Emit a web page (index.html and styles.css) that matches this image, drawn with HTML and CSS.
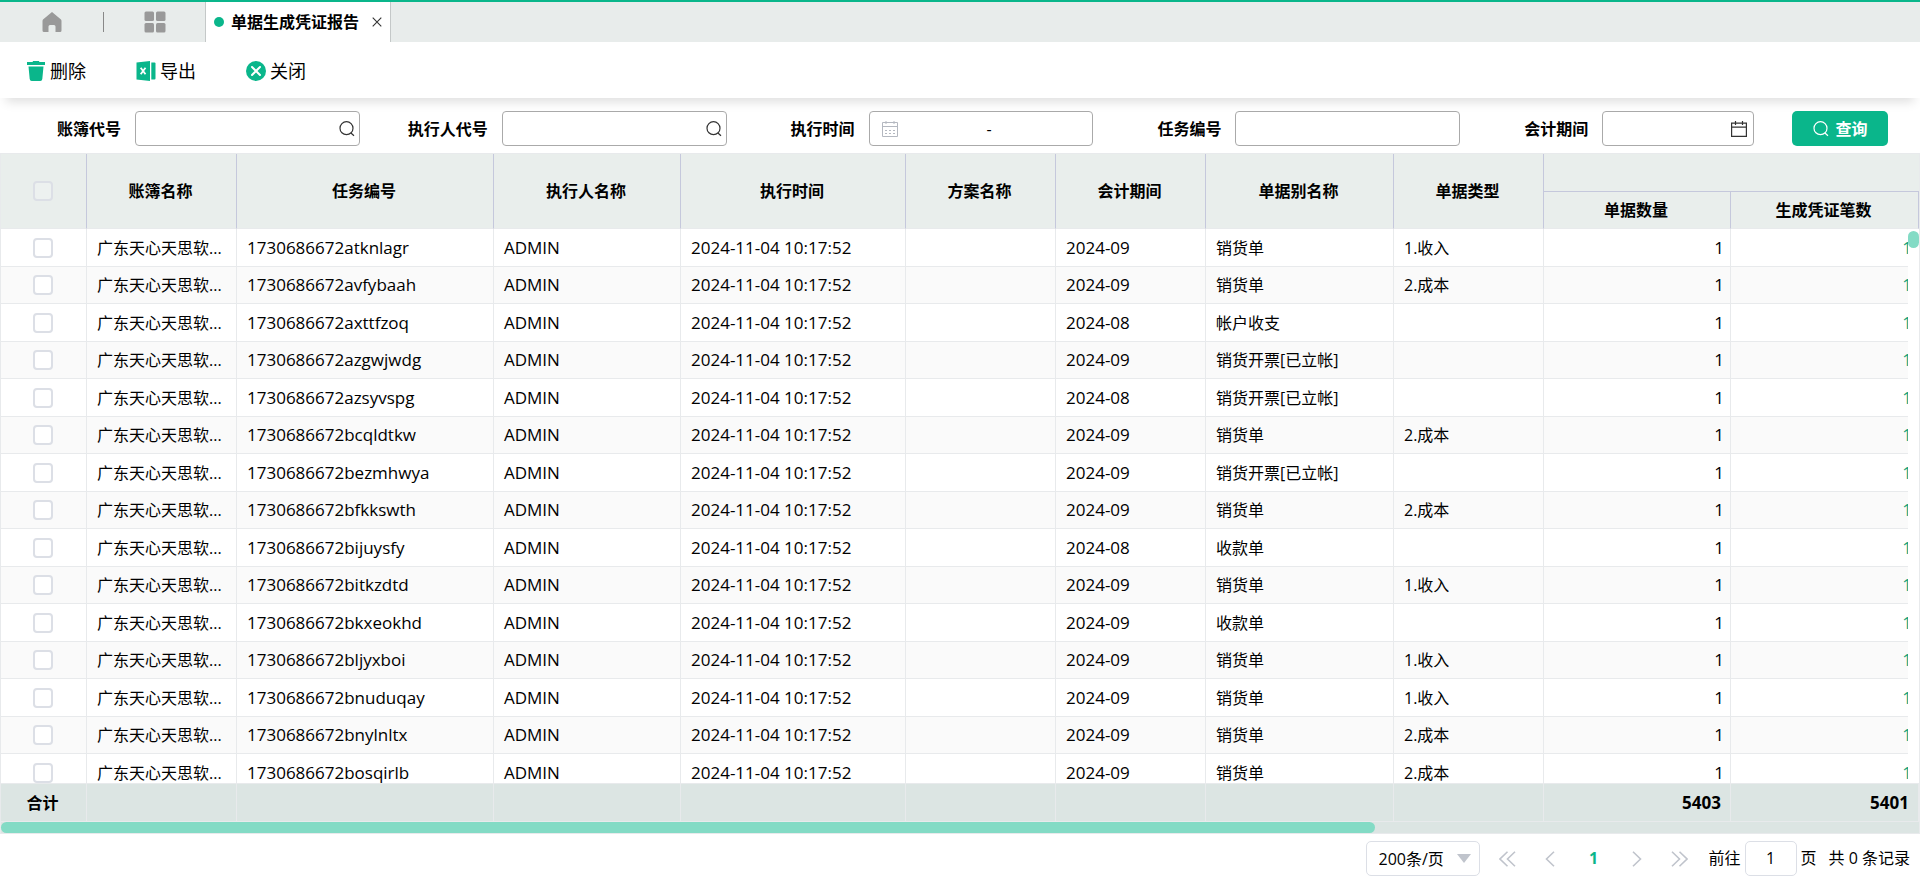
FILE: index.html
```html
<!DOCTYPE html>
<html lang="zh-CN">
<head>
<meta charset="utf-8">
<title>单据生成凭证报告</title>
<link rel="stylesheet" href="styles.css">
</head>
<body>
<div class="app">
  <nav class="tabs">
    <a class="nav-icon" href="#" aria-label="首页"><svg width="20" height="22" viewBox="0 0 20 22"><path d="M10 1 1 8.500Q.5 9 .5 10v9.500Q.5 21 2 21h4.500v-5.500Q6.500 14 8 14h4q1.500 0 1.500 1.500V21H18q1.500 0 1.500-1.500V10q0-1-.5-1.500z" fill="#999"/></svg></a>
    <span class="nav-line"></span>
    <a class="nav-icon" href="#" aria-label="应用"><svg width="22" height="22" viewBox="0 0 22 22" fill="#999"><rect x=".5" y=".5" width="9.500" height="9.500" rx="1.500"/><rect x="12" y=".5" width="9.500" height="9.500" rx="1.500"/><rect x=".5" y="12" width="9.500" height="9.500" rx="1.500"/><rect x="12" y="12" width="9.500" height="9.500" rx="1.500"/></svg></a>
    <div class="tab">
      <span class="dot"></span>
      <span class="tab-title">单据生成凭证报告</span>
      <button class="tab-close" aria-label="关闭标签"><svg width="10" height="10" viewBox="0 0 10 10"><path d="m.7.7 8.600 8.600M9.300.7.7 9.300" stroke="#333" stroke-width="1.100"/></svg></button>
    </div>
  </nav>

  <div class="toolbar">
    <button class="tool"><svg width="20" height="20" viewBox="0 0 20 20" fill="#0ab68b"><path d="M1 1h5.500l.6-1h5.800l.6 1H19v3H1zM2.500 5.500h15L16.300 18q-.2 2-2 2H5.700q-1.800 0-2-2z"/></svg>删除</button>
    <button class="tool"><svg width="20" height="20" viewBox="0 0 20 20"><path d="M.5 1.500 14 0v20L.5 18.500z" fill="#0ab68b"/><path d="M15.300 1.500h3.200q1 0 1 1v15q0 1-1 1h-3.200z" fill="#0ab68b"/><path d="m4.700 6.800 4.800 6.400m0-6.400-4.800 6.400" stroke="#fff" stroke-width="1.800"/></svg>导出</button>
    <button class="tool"><svg width="20" height="20" viewBox="0 0 20 20"><circle cx="10" cy="10" r="10" fill="#0ab68b"/><path d="m6 6 8 8m0-8-8 8" stroke="#fff" stroke-width="2" stroke-linecap="round"/></svg>关闭</button>
  </div>

  <form class="filters">
    <div class="field"><label for="book">账簿代号</label><div class="box"><input id="book" type="text"><svg class="glass" width="16" height="16" viewBox="0 0 16 16"><path d="M14 7.200A6.500 6.500 0 1 1 1 7.200a6.500 6.500 0 0 1 13 0zM12.200 12.200l2.800 2.600"/></svg></div></div>
    <div class="field"><label for="exec">执行人代号</label><div class="box"><input id="exec" type="text"><svg class="glass" width="16" height="16" viewBox="0 0 16 16"><path d="M14 7.200A6.500 6.500 0 1 1 1 7.200a6.500 6.500 0 0 1 13 0zM12.200 12.200l2.800 2.600"/></svg></div></div>
    <div class="field"><label for="from">执行时间</label><div class="box range"><svg width="16" height="16" viewBox="0 0 16 16" fill="none" stroke="#b4b8c0"><path d="M.5 1.500h15v14H.5zM.5 5.500h15M4 0v3M12 0v3"/><path d="M3 9.500h10M3 12.500h10" stroke-dasharray="2 2"/></svg><input id="from" type="text" aria-label="开始时间"><span>-</span><input type="text" aria-label="结束时间"></div></div>
    <div class="field"><label for="task">任务编号</label><div class="box"><input id="task" type="text"></div></div>
    <div class="field field-short"><label for="period">会计期间</label><div class="box period"><input id="period" type="text"><svg width="16" height="16" viewBox="0 0 16 16" fill="none" stroke="#333" stroke-width="1.200"><path d="M.6 2.100h14.800v13.300H.6zM.6 6.200h14.800M4.500 0v4M11.500 0v4"/></svg></div></div>
    <button class="query" type="button"><svg class="glass" width="16" height="16" viewBox="0 0 16 16"><path d="M14 7.200A6.500 6.500 0 1 1 1 7.200a6.500 6.500 0 0 1 13 0zM12.200 12.200l2.800 2.600"/></svg>查询</button>
  </form>

  <main class="grid">
    <table class="head">
      <colgroup><col class="c-check"><col class="c-s"><col class="c-task"><col class="c-m"><col class="c-time"><col class="c-s"><col class="c-s"><col class="c-l"><col class="c-s"><col class="c-m"><col class="c-l"></colgroup>
      <thead>
        <tr><th rowspan="2"><input type="checkbox" aria-label="全选"></th><th rowspan="2">账簿名称</th><th rowspan="2">任务编号</th><th rowspan="2">执行人名称</th><th rowspan="2">执行时间</th><th rowspan="2">方案名称</th><th rowspan="2">会计期间</th><th rowspan="2">单据别名称</th><th rowspan="2">单据类型</th><th class="group" colspan="2"></th></tr>
        <tr><th>单据数量</th><th>生成凭证笔数</th></tr>
      </thead>
    </table>
    <div class="rows">
      <table class="body">
        <colgroup><col class="c-check"><col class="c-s"><col class="c-task"><col class="c-m"><col class="c-time"><col class="c-s"><col class="c-s"><col class="c-l"><col class="c-s"><col class="c-m"><col class="c-l"></colgroup>
        <tbody>
          <tr><td><input type="checkbox" aria-label="选择"></td><td>广东天心天思软...</td><td class="lat">1730686672atknlagr</td><td class="lat">ADMIN</td><td class="lat">2024-11-04 10:17:52</td><td></td><td class="lat">2024-09</td><td>销货单</td><td>1.收入</td><td>1</td><td><a href="#">1</a></td></tr>
          <tr><td><input type="checkbox" aria-label="选择"></td><td>广东天心天思软...</td><td class="lat">1730686672avfybaah</td><td class="lat">ADMIN</td><td class="lat">2024-11-04 10:17:52</td><td></td><td class="lat">2024-09</td><td>销货单</td><td>2.成本</td><td>1</td><td><a href="#">1</a></td></tr>
          <tr><td><input type="checkbox" aria-label="选择"></td><td>广东天心天思软...</td><td class="lat">1730686672axttfzoq</td><td class="lat">ADMIN</td><td class="lat">2024-11-04 10:17:52</td><td></td><td class="lat">2024-08</td><td>帐户收支</td><td></td><td>1</td><td><a href="#">1</a></td></tr>
          <tr><td><input type="checkbox" aria-label="选择"></td><td>广东天心天思软...</td><td class="lat">1730686672azgwjwdg</td><td class="lat">ADMIN</td><td class="lat">2024-11-04 10:17:52</td><td></td><td class="lat">2024-09</td><td>销货开票[已立帐]</td><td></td><td>1</td><td><a href="#">1</a></td></tr>
          <tr><td><input type="checkbox" aria-label="选择"></td><td>广东天心天思软...</td><td class="lat">1730686672azsyvspg</td><td class="lat">ADMIN</td><td class="lat">2024-11-04 10:17:52</td><td></td><td class="lat">2024-08</td><td>销货开票[已立帐]</td><td></td><td>1</td><td><a href="#">1</a></td></tr>
          <tr><td><input type="checkbox" aria-label="选择"></td><td>广东天心天思软...</td><td class="lat">1730686672bcqldtkw</td><td class="lat">ADMIN</td><td class="lat">2024-11-04 10:17:52</td><td></td><td class="lat">2024-09</td><td>销货单</td><td>2.成本</td><td>1</td><td><a href="#">1</a></td></tr>
          <tr><td><input type="checkbox" aria-label="选择"></td><td>广东天心天思软...</td><td class="lat">1730686672bezmhwya</td><td class="lat">ADMIN</td><td class="lat">2024-11-04 10:17:52</td><td></td><td class="lat">2024-09</td><td>销货开票[已立帐]</td><td></td><td>1</td><td><a href="#">1</a></td></tr>
          <tr><td><input type="checkbox" aria-label="选择"></td><td>广东天心天思软...</td><td class="lat">1730686672bfkkswth</td><td class="lat">ADMIN</td><td class="lat">2024-11-04 10:17:52</td><td></td><td class="lat">2024-09</td><td>销货单</td><td>2.成本</td><td>1</td><td><a href="#">1</a></td></tr>
          <tr><td><input type="checkbox" aria-label="选择"></td><td>广东天心天思软...</td><td class="lat">1730686672bijuysfy</td><td class="lat">ADMIN</td><td class="lat">2024-11-04 10:17:52</td><td></td><td class="lat">2024-08</td><td>收款单</td><td></td><td>1</td><td><a href="#">1</a></td></tr>
          <tr><td><input type="checkbox" aria-label="选择"></td><td>广东天心天思软...</td><td class="lat">1730686672bitkzdtd</td><td class="lat">ADMIN</td><td class="lat">2024-11-04 10:17:52</td><td></td><td class="lat">2024-09</td><td>销货单</td><td>1.收入</td><td>1</td><td><a href="#">1</a></td></tr>
          <tr><td><input type="checkbox" aria-label="选择"></td><td>广东天心天思软...</td><td class="lat">1730686672bkxeokhd</td><td class="lat">ADMIN</td><td class="lat">2024-11-04 10:17:52</td><td></td><td class="lat">2024-09</td><td>收款单</td><td></td><td>1</td><td><a href="#">1</a></td></tr>
          <tr><td><input type="checkbox" aria-label="选择"></td><td>广东天心天思软...</td><td class="lat">1730686672bljyxboi</td><td class="lat">ADMIN</td><td class="lat">2024-11-04 10:17:52</td><td></td><td class="lat">2024-09</td><td>销货单</td><td>1.收入</td><td>1</td><td><a href="#">1</a></td></tr>
          <tr><td><input type="checkbox" aria-label="选择"></td><td>广东天心天思软...</td><td class="lat">1730686672bnuduqay</td><td class="lat">ADMIN</td><td class="lat">2024-11-04 10:17:52</td><td></td><td class="lat">2024-09</td><td>销货单</td><td>1.收入</td><td>1</td><td><a href="#">1</a></td></tr>
          <tr><td><input type="checkbox" aria-label="选择"></td><td>广东天心天思软...</td><td class="lat">1730686672bnylnltx</td><td class="lat">ADMIN</td><td class="lat">2024-11-04 10:17:52</td><td></td><td class="lat">2024-09</td><td>销货单</td><td>2.成本</td><td>1</td><td><a href="#">1</a></td></tr>
          <tr><td><input type="checkbox" aria-label="选择"></td><td>广东天心天思软...</td><td class="lat">1730686672bosqirlb</td><td class="lat">ADMIN</td><td class="lat">2024-11-04 10:17:52</td><td></td><td class="lat">2024-09</td><td>销货单</td><td>2.成本</td><td>1</td><td><a href="#">1</a></td></tr>
        </tbody>
      </table>
      <div class="vbar"><span></span></div>
    </div>
    <table class="total">
      <colgroup><col class="c-check"><col class="c-s"><col class="c-task"><col class="c-m"><col class="c-time"><col class="c-s"><col class="c-s"><col class="c-l"><col class="c-s"><col class="c-m"><col class="c-l"></colgroup>
      <tbody><tr><th>合计</th><td></td><td></td><td></td><td></td><td></td><td></td><td></td><td></td><td>5403</td><td>5401</td></tr></tbody>
    </table>
    <div class="hbar"><span></span></div>
  </main>

  <footer class="pager">
    <div class="size"><select aria-label="每页条数"><option>200条/页</option></select><svg width="14" height="9" viewBox="0 0 14 9"><path d="M0 0h14L7 9z" fill="#c0c4cc"/></svg></div>
    <div class="steps">
      <button aria-label="首页"><svg width="17" height="16" viewBox="0 0 17 16"><path d="M8.500.7 1 8l7.500 7.300M16 .7 8.500 8l7.500 7.300"/></svg></button>
      <button aria-label="上一页"><svg width="17" height="16" viewBox="0 0 17 16"><path d="M12 .7 4.500 8l7.500 7.300"/></svg></button>
      <button class="current">1</button>
      <button aria-label="下一页"><svg width="17" height="16" viewBox="0 0 17 16"><path d="M5 .7 12.500 8 5 15.300"/></svg></button>
      <button aria-label="末页"><svg width="17" height="16" viewBox="0 0 17 16"><path d="M1 .7 8.500 8 1 15.300M8.500.7 16 8l-7.500 7.300"/></svg></button>
    </div>
    <label class="jump">前往<input type="text" value="1">页</label>
    <span class="count">共 0 条记录</span>
  </footer>
</div>
</body>
</html>
```
FILE: styles.css
```css
* { box-sizing: border-box; }
body { margin: 0; font: 16px/20px "Open Sans", "Noto Sans CJK SC", sans-serif; color: #000; background: #fff; }
button, input, select { font: inherit; color: inherit; }
button { border: 0; padding: 0; background: none; cursor: pointer; }
svg { display: block; flex: none; }
a { text-decoration: none; }

.app { display: flex; flex-direction: column; height: 100vh; border-top: 2px solid #0ab68b; }

.tabs { display: flex; align-items: center; height: 40px; background: #e8eceb; flex: none; }
.nav-icon { display: flex; justify-content: center; width: 103px; }
.nav-line { width: 1px; height: 20px; background: #888; }
.nav-line + .nav-icon { width: 101px; }
.tab { display: flex; align-items: center; align-self: stretch; width: 186px; padding: 0 8px; background: #fff; border: solid #c4c8c8; border-width: 0 1px; }
.dot { width: 10px; height: 10px; border-radius: 50%; background: #0ab68b; margin-right: 7px; }
.tab-title { font-weight: 600; flex: 1; white-space: nowrap; }
.tab-close { display: flex; }

.toolbar { display: flex; align-items: center; gap: 50px; height: 56px; padding: 2px 0 0 26px; flex: none; background: #fff; box-shadow: 0 10px 10px -6px rgba(0, 0, 0, .13); position: relative; }
.tool { display: flex; align-items: center; gap: 4px; font-size: 18px; line-height: 24px; }

.filters { display: flex; align-items: center; gap: 7px; height: 55px; padding: 6px 32px 0 0; flex: none; }
.field { display: flex; align-items: center; flex: 360 1 0; }
.field-short { flex-grow: 287; }
.field label { width: 121px; margin-right: 14px; text-align: right; font-weight: 600; white-space: nowrap; }
.box { display: flex; align-items: center; flex: 1; min-width: 0; height: 35px; padding: 0 4px 0 8px; border: 1px solid #aaa; border-radius: 4px; background: #fff; }
.box input { flex: 1; min-width: 0; width: 0; height: 100%; border: 0; padding: 0; background: none; outline: 0; }
.box.range { padding: 0 12px; }
.box.period { padding-right: 6px; }
.glass { fill: none; stroke: currentColor; stroke-width: 1.2; }
.box .glass { color: #333; }
.query { display: flex; align-items: center; justify-content: center; gap: 7px; width: 96px; height: 35px; margin-left: 31px; border-radius: 5px; background: #0ab68b; color: #fff; font-weight: 600; }

.grid { display: flex; flex-direction: column; flex: 1; min-height: 0; border: 1px solid #e8eaec; }
table { table-layout: fixed; width: 100%; border-collapse: separate; border-spacing: 0; flex: none; }
.c-check { width: 86px; }
.c-s { width: 150px; }
.c-m { width: 187px; }
.c-l { width: 188px; }
.c-task { width: 257px; }
.c-time { width: 225px; }
th, td { padding: 0; border-right: 1px solid #e8eaec; border-bottom: 1px solid #e8eaec; white-space: nowrap; }
th:first-child input, td:first-child input { display: block; margin: 0 auto; }

.head th { height: 37px; padding-right: 2px; background: #e9eeec; font-weight: 600; border-right-color: #c5c8dc; }
.head .group { height: 38px; border-right: 0; border-bottom-color: #c5c8dc; }

.rows { position: relative; flex: 1; min-height: 0; overflow: hidden; }
.body td { height: 38px; padding-left: 10px; overflow: hidden; }
.body tr:nth-child(even) td { height: 37px; background: #fafafa; }
.body td:first-child, .head tr:first-child th:first-child, .total th { padding: 0 2px 0 0; }
.body .lat { font-size: 17px; }
.body td:nth-child(n+10), .total td { font-size: 17px; text-align: right; padding: 0 6px 0 0; }
.body a { color: #16a37a; }

input[type="checkbox"] { appearance: none; width: 20px; height: 20px; border: 2px solid #dcdfe6; border-radius: 4px; background: #fff; }
.head input[type="checkbox"] { background: #edf1f0; }

.vbar { position: absolute; top: 0; right: 0; bottom: 0; width: 11px; padding-top: 2px; background: #fff; }
.vbar span { display: block; height: 17px; border-radius: 6px; background: #83dbc5; }

.total th, .total td { height: 39px; background: #dce5e3; border-top: 1px solid #e8eaec; font-weight: 700; }
.total td:nth-child(n+10) { padding-right: 9px; }
.hbar { height: 11px; background: #dce5e3; flex: none; }
.hbar span { display: block; width: 71.64%; height: 11px; border-radius: 6px; background: #83dbc5; }

.pager { display: flex; align-items: flex-start; justify-content: flex-end; height: 61px; padding: 7px 10px 0 0; flex: none; line-height: 35px; white-space: nowrap; }
.size { position: relative; width: 114px; }
.size select { appearance: none; display: block; width: 100%; height: 35px; padding: 0 12px; border: 1px solid #dcdfe6; border-radius: 5px; background: #fff; }
.size svg { position: absolute; right: 9px; top: 13px; pointer-events: none; }
.steps { display: flex; gap: 3px; margin: 0 9px 0 8px; }
.steps button { display: flex; align-items: center; justify-content: center; width: 40px; height: 35px; }
.steps path { fill: none; stroke: #c0c4cc; stroke-width: 1.6; }
.steps .current { color: #0ab68b; font-weight: 700; }
.jump { display: flex; gap: 4px; }
.jump input { width: 52px; height: 35px; padding: 0; border: 1px solid #dcdfe6; border-radius: 5px; text-align: center; }
.count { margin-left: 12px; }
```
